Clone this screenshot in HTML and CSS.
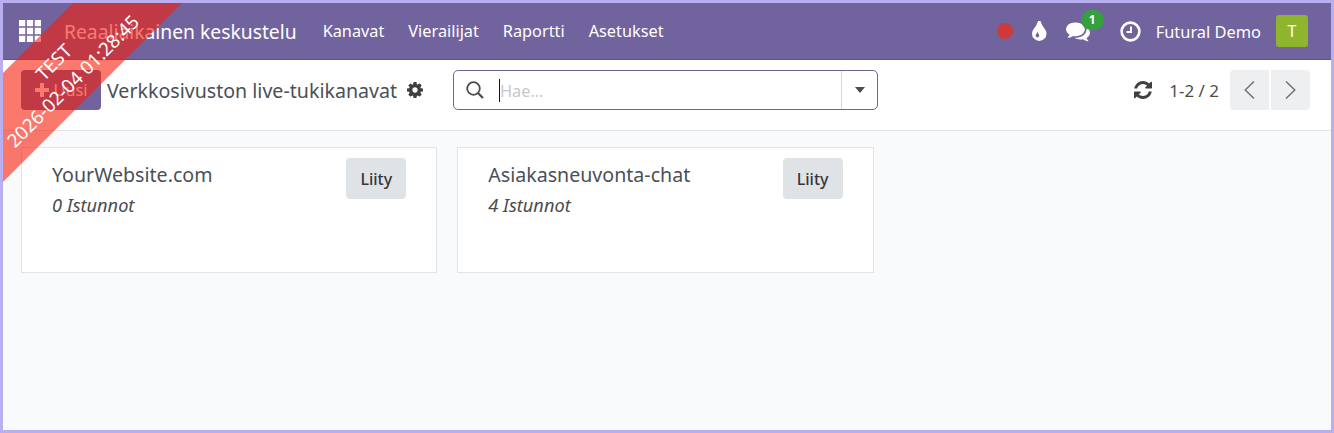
FILE: index.html
```html
<!DOCTYPE html>
<html lang="fi">

<head>
  <title>Verkkosivuston live-tukikanavat</title>
  <meta name="viewport" content="width=device-width, initial-scale=1">
  <link rel="stylesheet" href="styles.css">
</head>

<body>

  <div class="frame">

    <header class="navbar">
      <svg class="apps-icon" viewBox="0 0 21 21" width="22" height="22">
        <path d="M0 0h6v6H0zM7.500 0h6v6h-6zM15 0h6v6h-6zM0 7.500h6v6H0zM7.500 7.500h6v6h-6zM15 7.500h6v6h-6zM0 15h6v6H0zM7.500 15h6v6h-6zM15 15h6v6h-6z" fill="currentColor" />
      </svg>
      <span class="brand">Reaaliaikainen keskustelu</span>
      <nav class="menu">
        <span>Kanavat</span>
        <span>Vierailijat</span>
        <span>Raportti</span>
        <span>Asetukset</span>
      </nav>
      <div class="systray">
        <span class="status-dot"></span>
        <svg class="tray-drop" viewBox="384 128 1024 1408" width="14.500" height="20">
          <path d="M896 1152q0-36-20-69-1-1-15.500-22.500t-25.500-38-25-44-21-50.500q-4-16-21-16t-21 16q-7 23-21 50.500t-25 44-25.500 38-15.500 22.500q-20 33-20 69 0 53 37.500 90.500t90.500 37.500 90.500-37.500 37.500-90.500zm512-128q0 212-150 362t-362 150-362-150-150-362q0-145 81-275 6-9 62.500-90.500t101-151 99.500-178 83-201.500q9-30 34-47t51-17 51.500 17 33.500 47q28 93 83 201.500t99.500 178 101 151 62.500 90.500q81 127 81 275z" fill="currentColor" />
        </svg>
        <span class="tray-chat">
          <svg viewBox="0 0 1792 1792" width="24" height="24">
            <path d="M1408 768q0 139-94 257t-256.500 186.500-353.500 68.500q-86 0-176-16-124 88-278 128-36 9-86 16h-3q-11 0-20.500-8t-11.500-21q-1-3-1-6.500t.5-6.500 2-6l2.500-5 3.500-5.500 4-5 4.500-5 4-4.500q5-6 23-25t26-29.500 22.500-29 25-38.500 20.500-44q-124-72-195-177t-71-224q0-139 94-257t256.500-186.500 353.500-68.500 353.500 68.500 256.500 186.500 94 257zm384 256q0 120-71 224.500t-195 176.500q10 24 20.500 44t25 38.500 22.500 29 26 29.500 23 25q1 1 4 4.500t4.500 5 4 5 3.500 5.500l2.500 5 2 6 .5 6.500-1 6.500q-3 14-13 22t-22 7q-50-7-86-16-154-40-278-128-90 16-176 16-271 0-472-132 58 4 88 4 161 0 309-45t264-129q125-92 192-212t67-254q0-77-23-152 129 71 204 178t75 230z" fill="currentColor" />
          </svg>
          <span class="badge">1</span>
        </span>
        <svg class="tray-clock" viewBox="0 0 21 21" width="21" height="21">
          <circle cx="10.500" cy="10.500" r="8.900" fill="none" stroke="currentColor" stroke-width="2.600" />
          <path d="M11 5.500v5.500H6.500" fill="none" stroke="currentColor" stroke-width="2" />
        </svg>
        <span class="user-name">Futural Demo</span>
        <span class="avatar">T</span>
      </div>
    </header>

    <section class="control-panel">
      <button class="btn-new">
        <svg viewBox="0 0 14 14" width="14" height="14">
          <path d="M5 0h4v5h5v4H9v5H5V9H0V5h5z" fill="currentColor" />
        </svg>
        <span>Uusi</span>
      </button>
      <h1 class="page-title">Verkkosivuston live-tukikanavat</h1>
      <svg class="gear" viewBox="128 128 1536 1536" width="16" height="16">
        <path d="M1152 896q0-106-75-181t-181-75-181 75-75 181 75 181 181 75 181-75 75-181zm512-109v222q0 12-8 23t-20 13l-185 28q-19 54-39 91 35 50 107 138 10 12 10 25t-9 23q-27 37-99 108t-94 71q-12 0-26-9l-138-108q-44 23-91 38-16 136-29 186-7 28-36 28h-222q-14 0-24.500-8.500t-11.500-21.500l-28-184q-49-16-90-37l-141 107q-10 9-25 9-14 0-25-11-126-114-165-168-7-10-7-23 0-12 8-23 15-21 51-66.500t54-70.500q-27-50-41-99l-183-27q-13-2-21-12.500t-8-23.500v-222q0-12 8-23t19-13l186-28q14-46 39-92-40-57-107-138-10-12-10-24 0-10 9-23 26-36 98.500-107.500t94.500-71.500q13 0 26 10l138 107q44-23 91-38 16-136 29-186 7-28 36-28h222q14 0 24.500 8.500t11.500 21.500l28 184q49 16 90 37l142-107q9-9 24-9 13 0 25 10 129 119 165 170 7 8 7 22 0 12-8 23-15 21-51 66.500t-54 70.500q26 50 41 98l183 28q13 2 21 12.500t8 23.500z" fill="currentColor" />
      </svg>
      <div class="search">
        <svg class="search-icon" viewBox="0 0 18 18" width="18" height="18">
          <circle cx="7.500" cy="7.500" r="6.300" fill="none" stroke="currentColor" stroke-width="1.800" />
          <path d="M12 12l5 5" stroke="currentColor" stroke-width="2.200" />
        </svg>
        <span class="caret"></span>
        <span class="placeholder">Hae...</span>
        <span class="search-toggle"><span class="arrow-down"></span></span>
      </div>
      <div class="pager">
        <svg class="refresh" viewBox="128 128 1536 1536" width="18" height="18">
          <path d="M1639 1056q0 5-1 7-64 268-268 434.500t-478 166.500q-146 0-282.500-55t-243.500-157l-129 129q-19 19-45 19t-45-19-19-45v-448q0-26 19-45t45-19h448q26 0 45 19t19 45-19 45l-137 137q71 66 161 102t187 36q134 0 250-65t186-179q11-17 53-117 8-23 30-23h192q13 0 22.500 9.500t9.500 22.500zm25-800v448q0 26-19 45t-45 19h-448q-26 0-45-19t-19-45 19-45l138-138q-148-137-349-137-134 0-250 65t-186 179q-11 17-53 117-8 23-30 23h-199q-13 0-22.500-9.500t-9.500-22.500v-7q65-268 270-434.500t480-166.500q146 0 284 55.500t245 156.500l130-129q19-19 45-19t45 19 19 45z" fill="currentColor" />
        </svg>
        <span class="pager-value">1-2 / 2</span>
        <span class="pager-btns">
          <span class="pager-btn">
            <svg viewBox="0 0 11 18" width="11" height="18"><path d="M10 .5L1.200 9l8.800 8.500" fill="none" stroke="currentColor" stroke-width="1.400" /></svg>
          </span>
          <span class="pager-btn">
            <svg viewBox="0 0 11 18" width="11" height="18"><path d="M1 .5L9.800 9 1 17.500" fill="none" stroke="currentColor" stroke-width="1.400" /></svg>
          </span>
        </span>
      </div>
    </section>

    <main class="kanban">
      <article class="card">
        <div>
          <div class="card-name">YourWebsite.com</div>
          <div class="card-count">0 Istunnot</div>
        </div>
        <button class="btn-join">Liity</button>
      </article>
      <article class="card">
        <div>
          <div class="card-name">Asiakasneuvonta-chat</div>
          <div class="card-count">4 Istunnot</div>
        </div>
        <button class="btn-join">Liity</button>
      </article>
    </main>

    <div class="ribbon">
      <span>TEST</span>
      <span>2026-02-04 01:28:45</span>
    </div>

  </div>

</body>

</html>
```

FILE: styles.css
```css
/* ******************** global ******************* */

* {
  box-sizing: border-box;
}

html,
body {
  margin: 0;
  padding: 0;
  width: 100%;
  height: 100%;
  overflow: hidden;
}

body {
  font-family: "Noto Sans", "Open Sans", sans-serif;
  color: #4c4c4c;
}

.frame {
  position: relative;
  display: flex;
  flex-direction: column;
  height: 100%;
  border: 3px solid #b9aef0;
  background-color: #f9fafb;
  overflow: hidden;
}

/* ******************** navbar ******************* */

.navbar {
  display: flex;
  align-items: center;
  flex: 0 0 57px;
  padding: 0 23px 0 16px;
  background-color: #71639e;
  color: #fff;
  border-bottom: 1px solid #5f5387;
}

.apps-icon {
  margin-right: 23px;
}

.brand {
  font-size: 19.300px;
  margin-right: 26px;
}

.menu {
  display: flex;
  gap: 24px;
  font-size: 16.300px;
}

.systray {
  display: flex;
  align-items: center;
  margin-left: auto;
}

.status-dot {
  width: 16px;
  height: 16px;
  border-radius: 50%;
  background-color: #d0393c;
  margin-right: 19px;
}

.tray-chat {
  position: relative;
  display: flex;
  margin: 0 30px 0 19px;
}

.badge {
  position: absolute;
  top: -9px;
  left: 15px;
  width: 23px;
  height: 20px;
  border-radius: 10px;
  background-color: #36a03e;
  font-size: 12px;
  font-weight: 700;
  line-height: 20px;
  text-align: center;
}

.user-name {
  font-size: 16.400px;
  margin: 0 15px;
}

.avatar {
  width: 32px;
  height: 32px;
  border-radius: 3px;
  background-color: #8fb52f;
  font-size: 16px;
  line-height: 32px;
  text-align: center;
}

/* ******************** control panel ******************* */

.control-panel {
  display: flex;
  align-items: center;
  flex: 0 0 71px;
  padding: 10px 21px 20px 18px;
  background-color: #fff;
  border-bottom: 1px solid #e2e4e8;
}

.btn-new {
  display: flex;
  align-items: center;
  justify-content: center;
  gap: 5px;
  width: 80px;
  height: 40px;
  padding: 0;
  margin-right: 6px;
  border: none;
  border-radius: 4px;
  background-color: #71639e;
  color: #fff;
  font-family: inherit;
  font-size: 16.300px;
}

.page-title {
  margin: 0 10px 0 0;
  font-size: 19.600px;
  font-weight: 400;
  color: #4a5058;
}

.gear {
  color: #3f3f3f;
  margin-right: 30px;
}

.search {
  display: flex;
  align-items: center;
  width: 425px;
  height: 40px;
  border: 1px solid #6d6490;
  border-radius: 5px;
  padding-left: 12px;
  color: #4c4c4c;
}

.search-icon {
  margin-right: 15px;
}

.caret {
  width: 1px;
  height: 23px;
  background-color: #111;
}

.placeholder {
  flex: 1;
  padding-top: 2px;
  font-size: 16.300px;
  color: #c8c8cc;
}

.search-toggle {
  display: flex;
  align-items: center;
  justify-content: center;
  width: 36px;
  height: 100%;
  border-left: 1px solid #d8dadd;
}

.arrow-down {
  width: 0;
  height: 0;
  border-style: solid;
  border-width: 6px 5.500px 0;
  border-color: #4c4c4c transparent transparent;
}

.pager {
  display: flex;
  align-items: center;
  margin-left: auto;
}

.refresh {
  color: #3f3f3f;
}

.pager-value {
  margin: 0 11px 0 17px;
  font-size: 17px;
}

.pager-btns {
  display: flex;
  gap: 2px;
}

.pager-btn {
  display: flex;
  align-items: center;
  justify-content: center;
  width: 39px;
  height: 40px;
  background-color: #eeeff0;
  color: #6e6e6e;
}

.pager-btn:first-child {
  border-radius: 4px 0 0 4px;
}

.pager-btn:last-child {
  border-radius: 0 4px 4px 0;
}

/* ******************** kanban ******************* */

.kanban {
  display: flex;
  gap: 20px;
  padding: 16px 18px;
}

.card {
  display: flex;
  justify-content: space-between;
  align-items: flex-start;
  width: 416.300px;
  height: 126px;
  padding: 10px 30px 0 30px;
  background-color: #fff;
  border: 1px solid #e2e4e8;
}

.card-name {
  margin-top: 3px;
  font-size: 19.600px;
  color: #4a5058;
}

.card-count {
  margin-top: 5px;
  font-size: 18.200px;
  font-style: italic;
}

.btn-join {
  width: 60px;
  height: 41px;
  padding: 1px 0 0;
  border: none;
  border-radius: 4px;
  background-color: #e0e3e5;
  color: #32363b;
  font-family: inherit;
  font-size: 16px;
  font-weight: 500;
}

/* ******************** ribbon ******************* */

.ribbon {
  position: absolute;
  top: 23.500px;
  left: -88px;
  display: flex;
  flex-direction: column;
  align-items: center;
  width: 300px;
  height: 77px;
  padding: 15px 11px 0 0;
  background-color: rgba(247, 30, 10, 0.6);
  color: #fff;
  font-size: 18.800px;
  line-height: 27px;
  transform: rotate(-45deg);
}
```
